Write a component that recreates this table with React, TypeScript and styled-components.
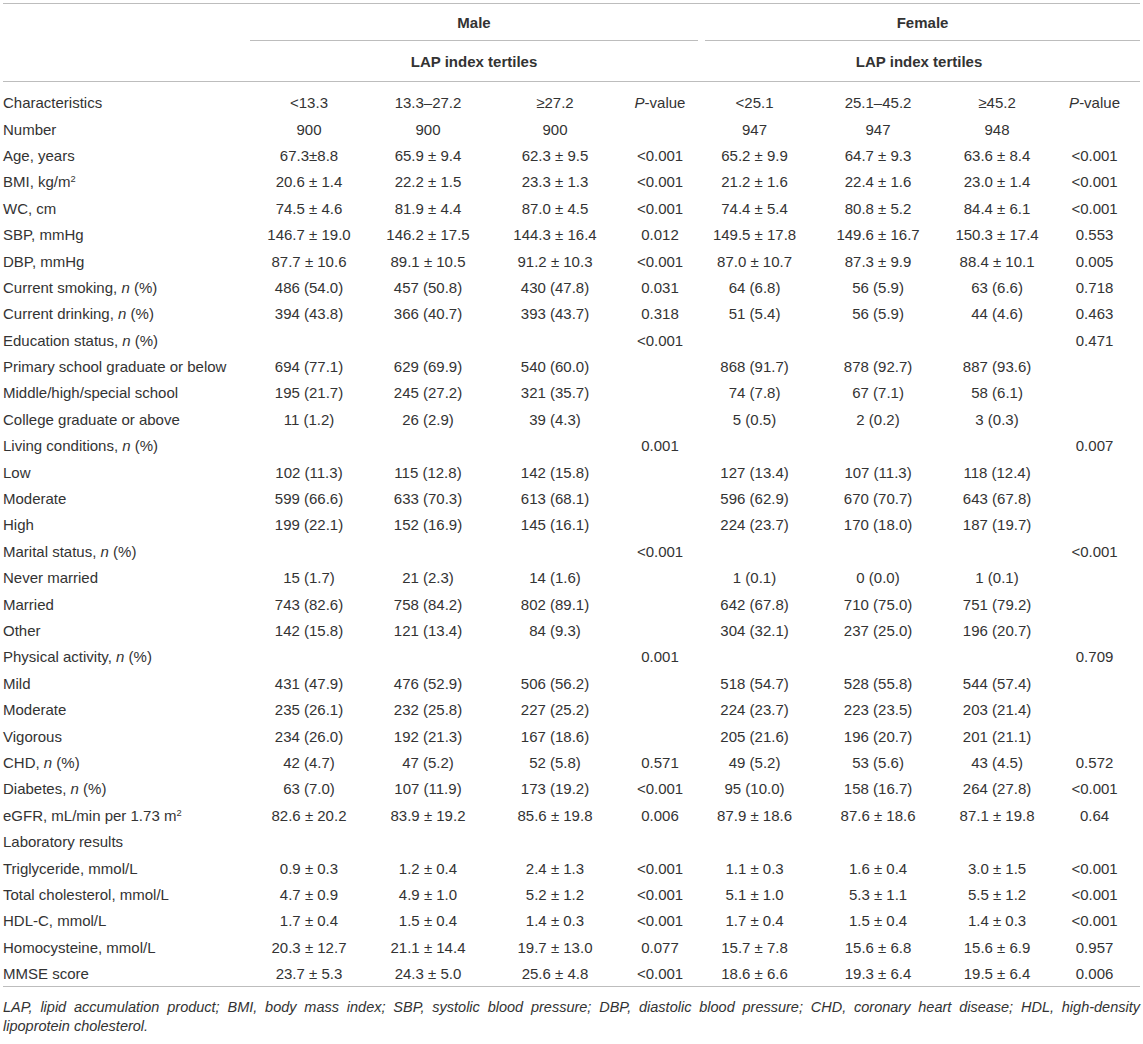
import React from "react";
import styled, { createGlobalStyle } from "styled-components";

const GlobalStyle = createGlobalStyle`
  html, body { margin: 0; padding: 0; background: #ffffff; }
  body {
    font-family: "Liberation Sans", Arial, Helvetica, sans-serif;
    color: #333333;
  }
`;

const Page = styled.div`
  width: 1137px;
  padding: 3px 3px 0 3px;
`;

const Table = styled.table`
  width: 1137px;
  border-collapse: collapse;
  table-layout: fixed;
  font-size: 15px;
  color: #333333;
`;

const GroupHeadCell = styled.th`
  padding: 0;
  border-top: 1px solid #bdbdbd;
  vertical-align: bottom;
`;

const GroupTitle = styled.div<{ $inset: number }>`
  height: 36px;
  margin-left: ${(p) => p.$inset}px;
  display: flex;
  align-items: center;
  justify-content: center;
  font-weight: bold;
  border-bottom: 1px solid #bdbdbd;
`;

const SubHeadCell = styled.th`
  height: 40px;
  padding: 0;
  font-weight: bold;
  text-align: center;
  border-bottom: 1px solid #bdbdbd;
`;

const Row = styled.tr`
  &:first-child > td {
    height: 34.4px;
    padding-top: 8px;
  }
  &:last-child > td {
    border-bottom: 1px solid #bdbdbd;
  }
`;

const Cell = styled.td<{ $align: "left" | "center" }>`
  box-sizing: border-box;
  height: 26.4px;
  padding: 0;
  line-height: 1;
  white-space: nowrap;
  text-align: ${(p) => p.$align};
  vertical-align: middle;
  overflow: visible;
`;

const Sup = styled.sup`
  font-size: 0.62em;
  line-height: 0;
  vertical-align: 0.55em;
`;

const Footnote = styled.p`
  margin: 11px 0 0;
  font-size: 14.5px;
  line-height: 19px;
  font-style: italic;
  color: #333333;
`;

const FootLine = styled.span<{ $justify?: boolean }>`
  display: block;
  text-align: ${(p) => (p.$justify ? "justify" : "left")};
  text-align-last: ${(p) => (p.$justify ? "justify" : "left")};
`;

const widths = [247, 118, 120, 134, 76, 113, 134, 104, 91];

const N = () => <i>n</i>;
const PVal = () => (
  <>
    <i>P</i>-value
  </>
);

type RowData = [React.ReactNode, ...string[]];

const rows: RowData[] = [
  ["Number", "900", "900", "900", "", "947", "947", "948", ""],
  ["Age, years", "67.3±8.8", "65.9 ± 9.4", "62.3 ± 9.5", "<0.001", "65.2 ± 9.9", "64.7 ± 9.3", "63.6 ± 8.4", "<0.001"],
  [<>BMI, kg/m<Sup>2</Sup></>, "20.6 ± 1.4", "22.2 ± 1.5", "23.3 ± 1.3", "<0.001", "21.2 ± 1.6", "22.4 ± 1.6", "23.0 ± 1.4", "<0.001"],
  ["WC, cm", "74.5 ± 4.6", "81.9 ± 4.4", "87.0 ± 4.5", "<0.001", "74.4 ± 5.4", "80.8 ± 5.2", "84.4 ± 6.1", "<0.001"],
  ["SBP, mmHg", "146.7 ± 19.0", "146.2 ± 17.5", "144.3 ± 16.4", "0.012", "149.5 ± 17.8", "149.6 ± 16.7", "150.3 ± 17.4", "0.553"],
  ["DBP, mmHg", "87.7 ± 10.6", "89.1 ± 10.5", "91.2 ± 10.3", "<0.001", "87.0 ± 10.7", "87.3 ± 9.9", "88.4 ± 10.1", "0.005"],
  [<>Current smoking, <N /> (%)</>, "486 (54.0)", "457 (50.8)", "430 (47.8)", "0.031", "64 (6.8)", "56 (5.9)", "63 (6.6)", "0.718"],
  [<>Current drinking, <N /> (%)</>, "394 (43.8)", "366 (40.7)", "393 (43.7)", "0.318", "51 (5.4)", "56 (5.9)", "44 (4.6)", "0.463"],
  [<>Education status, <N /> (%)</>, "", "", "", "<0.001", "", "", "", "0.471"],
  ["Primary school graduate or below", "694 (77.1)", "629 (69.9)", "540 (60.0)", "", "868 (91.7)", "878 (92.7)", "887 (93.6)", ""],
  ["Middle/high/special school", "195 (21.7)", "245 (27.2)", "321 (35.7)", "", "74 (7.8)", "67 (7.1)", "58 (6.1)", ""],
  ["College graduate or above", "11 (1.2)", "26 (2.9)", "39 (4.3)", "", "5 (0.5)", "2 (0.2)", "3 (0.3)", ""],
  [<>Living conditions, <N /> (%)</>, "", "", "", "0.001", "", "", "", "0.007"],
  ["Low", "102 (11.3)", "115 (12.8)", "142 (15.8)", "", "127 (13.4)", "107 (11.3)", "118 (12.4)", ""],
  ["Moderate", "599 (66.6)", "633 (70.3)", "613 (68.1)", "", "596 (62.9)", "670 (70.7)", "643 (67.8)", ""],
  ["High", "199 (22.1)", "152 (16.9)", "145 (16.1)", "", "224 (23.7)", "170 (18.0)", "187 (19.7)", ""],
  [<>Marital status, <N /> (%)</>, "", "", "", "<0.001", "", "", "", "<0.001"],
  ["Never married", "15 (1.7)", "21 (2.3)", "14 (1.6)", "", "1 (0.1)", "0 (0.0)", "1 (0.1)", ""],
  ["Married", "743 (82.6)", "758 (84.2)", "802 (89.1)", "", "642 (67.8)", "710 (75.0)", "751 (79.2)", ""],
  ["Other", "142 (15.8)", "121 (13.4)", "84 (9.3)", "", "304 (32.1)", "237 (25.0)", "196 (20.7)", ""],
  [<>Physical activity, <N /> (%)</>, "", "", "", "0.001", "", "", "", "0.709"],
  ["Mild", "431 (47.9)", "476 (52.9)", "506 (56.2)", "", "518 (54.7)", "528 (55.8)", "544 (57.4)", ""],
  ["Moderate", "235 (26.1)", "232 (25.8)", "227 (25.2)", "", "224 (23.7)", "223 (23.5)", "203 (21.4)", ""],
  ["Vigorous", "234 (26.0)", "192 (21.3)", "167 (18.6)", "", "205 (21.6)", "196 (20.7)", "201 (21.1)", ""],
  [<>CHD, <N /> (%)</>, "42 (4.7)", "47 (5.2)", "52 (5.8)", "0.571", "49 (5.2)", "53 (5.6)", "43 (4.5)", "0.572"],
  [<>Diabetes, <N /> (%)</>, "63 (7.0)", "107 (11.9)", "173 (19.2)", "<0.001", "95 (10.0)", "158 (16.7)", "264 (27.8)", "<0.001"],
  [<>eGFR, mL/min per 1.73 m<Sup>2</Sup></>, "82.6 ± 20.2", "83.9 ± 19.2", "85.6 ± 19.8", "0.006", "87.9 ± 18.6", "87.6 ± 18.6", "87.1 ± 19.8", "0.64"],
  ["Laboratory results", "", "", "", "", "", "", "", ""],
  ["Triglyceride, mmol/L", "0.9 ± 0.3", "1.2 ± 0.4", "2.4 ± 1.3", "<0.001", "1.1 ± 0.3", "1.6 ± 0.4", "3.0 ± 1.5", "<0.001"],
  ["Total cholesterol, mmol/L", "4.7 ± 0.9", "4.9 ± 1.0", "5.2 ± 1.2", "<0.001", "5.1 ± 1.0", "5.3 ± 1.1", "5.5 ± 1.2", "<0.001"],
  ["HDL-C, mmol/L", "1.7 ± 0.4", "1.5 ± 0.4", "1.4 ± 0.3", "<0.001", "1.7 ± 0.4", "1.5 ± 0.4", "1.4 ± 0.3", "<0.001"],
  ["Homocysteine, mmol/L", "20.3 ± 12.7", "21.1 ± 14.4", "19.7 ± 13.0", "0.077", "15.7 ± 7.8", "15.6 ± 6.8", "15.6 ± 6.9", "0.957"],
  ["MMSE score", "23.7 ± 5.3", "24.3 ± 5.0", "25.6 ± 4.8", "<0.001", "18.6 ± 6.6", "19.3 ± 6.4", "19.5 ± 6.4", "0.006"],
];

const headerRow: React.ReactNode[] = [
  "Characteristics",
  "<13.3",
  "13.3–27.2",
  "≥27.2",
  <PVal key="p1" />,
  "<25.1",
  "25.1–45.2",
  "≥45.2",
  <PVal key="p2" />,
];

export default function App() {
  const allRows: React.ReactNode[][] = [headerRow, ...rows];
  return (
    <Page>
      <GlobalStyle />
      <Table>
        <colgroup>
          {widths.map((w, i) => (
            <col key={i} style={{ width: w }} />
          ))}
        </colgroup>
        <thead>
          <tr>
            <GroupHeadCell />
            <GroupHeadCell colSpan={4}>
              <GroupTitle $inset={0}>Male</GroupTitle>
            </GroupHeadCell>
            <GroupHeadCell colSpan={4}>
              <GroupTitle $inset={7}>Female</GroupTitle>
            </GroupHeadCell>
          </tr>
          <tr>
            <SubHeadCell />
            <SubHeadCell colSpan={4}>LAP index tertiles</SubHeadCell>
            <SubHeadCell colSpan={4}>LAP index tertiles</SubHeadCell>
          </tr>
        </thead>
        <tbody>
          {allRows.map((r, i) => (
            <Row key={i}>
              {r.map((c, j) => (
                <Cell key={j} $align={j === 0 ? "left" : "center"}>
                  {c}
                </Cell>
              ))}
            </Row>
          ))}
        </tbody>
      </Table>
      <Footnote>
        <FootLine $justify>
          LAP, lipid accumulation product; BMI, body mass index; SBP, systolic blood pressure; DBP,
          diastolic blood pressure; CHD, coronary heart disease; HDL, high-density
        </FootLine>
        <FootLine>lipoprotein cholesterol.</FootLine>
      </Footnote>
    </Page>
  );
}
